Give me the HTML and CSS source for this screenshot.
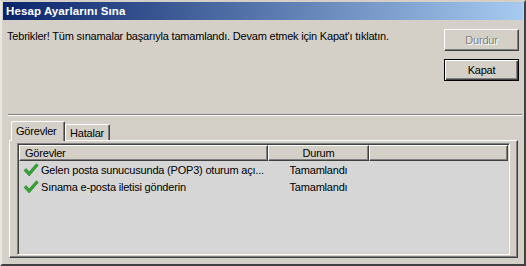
FILE: index.html
```html
<!DOCTYPE html>
<html lang="tr">
<head>
  <meta charset="UTF-8">
  <title>Hesap Ayarlarını Sına</title>
  <link rel="stylesheet" href="styles.css">
</head>
<body>

  <div class="window">
    <div class="titlebar">Hesap Ayarlarını Sına</div>

    <div class="content">
      <div class="top">
        <p class="message">Tebrikler! Tüm sınamalar başarıyla tamamlandı. Devam etmek için Kapat'ı tıklatın.</p>
        <div class="actions">
          <button class="btn" disabled>Durdur</button>
          <button class="btn default">Kapat</button>
        </div>
      </div>

      <div class="separator"></div>

      <!-- Sekmeler -->
      <div class="tabs">
        <div class="tab active">Görevler</div>
        <div class="tab">Hatalar</div>
      </div>

      <div class="tab-panel">
        <div class="listview">
          <div class="list-header">
            <div class="col col-task">Görevler</div>
            <div class="col col-status">Durum</div>
            <div class="col col-rest"></div>
          </div>

          <div class="row">
            <div class="cell-task">
              <svg class="check" width="16" height="16" viewBox="0 0 16 16">
                <path d="M1 8.5 L3.2 6.6 L6 10 L13.4 1.8 L15.2 3.4 L6.2 14 Z" fill="#36a336" stroke="#1c7a1c" stroke-width="0.6"/>
              </svg>
              <span>Gelen posta sunucusunda (POP3) oturum açı...</span>
            </div>
            <div class="cell-status">Tamamlandı</div>
          </div>

          <div class="row">
            <div class="cell-task">
              <svg class="check" width="16" height="16" viewBox="0 0 16 16">
                <path d="M1 8.5 L3.2 6.6 L6 10 L13.4 1.8 L15.2 3.4 L6.2 14 Z" fill="#36a336" stroke="#1c7a1c" stroke-width="0.6"/>
              </svg>
              <span>Sınama e-posta iletisi gönderin</span>
            </div>
            <div class="cell-status">Tamamlandı</div>
          </div>
        </div>
      </div>
    </div>
  </div>

</body>
</html>
```

FILE: styles.css
```css
body {
  margin: 0;
  background-color: #d4d0c8;
  font-family: "Liberation Sans", Arial, sans-serif;
  font-size: 11px;
  letter-spacing: -0.2px;
  color: #000;
}

/* Cadre de la fenêtre */
.window {
  width: 526px;
  height: 266px;
  box-sizing: border-box;
  padding: 0 1px 1px 1px;
  border: 2px solid;
  border-color: #ffffff #404040 #404040 #ffffff;
  border-top-color: #d4d0c8;
  border-left-color: #e8e6e0;
  background-color: #d4d0c8;
  display: flex;
  flex-direction: column;
}

.titlebar {
  height: 18px;
  line-height: 18px;
  padding-left: 3px;
  background: linear-gradient(to right, #0a246a, #a6caf0);
  color: #fff;
  font-weight: bold;
  font-size: 11.5px;
  letter-spacing: 0.1px;
}

.content {
  flex: 1;
  padding: 9px 4px 0 4px;
  display: flex;
  flex-direction: column;
}

.top {
  display: flex;
  justify-content: space-between;
  align-items: flex-start;
}

.message {
  margin: 0;
  padding-top: 1px;
  line-height: 13px;
}

.actions {
  display: flex;
  flex-direction: column;
  gap: 8px;
}

/* Boutons style Windows classique */
.btn {
  width: 75px;
  height: 22px;
  padding: 0;
  font-family: inherit;
  font-size: 11px;
  letter-spacing: inherit;
  color: #000;
  background-color: #d4d0c8;
  border: 1px solid;
  border-color: #ffffff #404040 #404040 #ffffff;
  box-shadow: inset -1px -1px 0 #808080;
}

.btn:disabled {
  color: #808080;
  text-shadow: 1px 1px 0 #ffffff;
}

.btn.default {
  border: 1px solid #000;
  box-shadow: inset 1px 1px 0 #ffffff, inset -1px -1px 0 #404040, inset -2px -2px 0 #808080;
}

.separator {
  margin: 33px -3px 0 1px;
  height: 1px;
  background-color: #808080;
  border-bottom: 1px solid #ffffff;
}

/* Sekmeler */
.tabs {
  display: flex;
  align-items: flex-end;
  height: 18px;
  margin: 6px 0 0 4px;
}

.tab {
  height: 16px;
  line-height: 16px;
  padding: 0 5px 0 4px;
  box-sizing: border-box;
  border: 1px solid;
  border-color: #ffffff #404040 transparent #ffffff;
  border-bottom: none;
  box-shadow: inset -1px 0 0 #808080;
  border-radius: 2px 2px 0 0;
}

.tab.active {
  width: 54px;
  height: 20px;
  line-height: 18px;
  margin-bottom: -1px;
  position: relative;
  z-index: 1;
  background-color: #d4d0c8;
}

.tab-panel {
  height: 118px;
  box-sizing: border-box;
  margin: 0 1px 0 2px;
  padding: 2px 7px 2px 7px;
  border: 1px solid;
  border-color: #ffffff #404040 #404040 #ffffff;
  box-shadow: inset -1px -1px 0 #808080;
  display: flex;
}

/* Liste des tâches */
.listview {
  flex: 1;
  border: 1px solid;
  border-color: #808080 #ffffff #ffffff #808080;
  box-shadow: inset 1px 1px 0 #404040, inset -1px -1px 0 #d4d0c8;
  background-color: #d6d6d6;
  padding: 1px;
}

.list-header {
  display: flex;
  height: 16px;
}

.col {
  box-sizing: border-box;
  height: 16px;
  line-height: 14px;
  background-color: #d4d0c8;
  border: 1px solid;
  border-color: #ffffff #404040 #404040 #ffffff;
  box-shadow: inset -1px -1px 0 #808080;
}

.col-task {
  width: 249px;
  padding-left: 5px;
}

.col-status {
  width: 101px;
  text-align: center;
}

.col-rest {
  flex: 1;
}

.row {
  display: flex;
  height: 17px;
  align-items: center;
}

.row:first-of-type {
  margin-top: 1px;
}

.cell-task {
  width: 249px;
  display: flex;
  align-items: center;
  gap: 2px;
  padding-left: 4px;
  box-sizing: border-box;
  white-space: nowrap;
}

.check {
  flex-shrink: 0;
}

.cell-status {
  width: 101px;
  text-align: center;
}
```
